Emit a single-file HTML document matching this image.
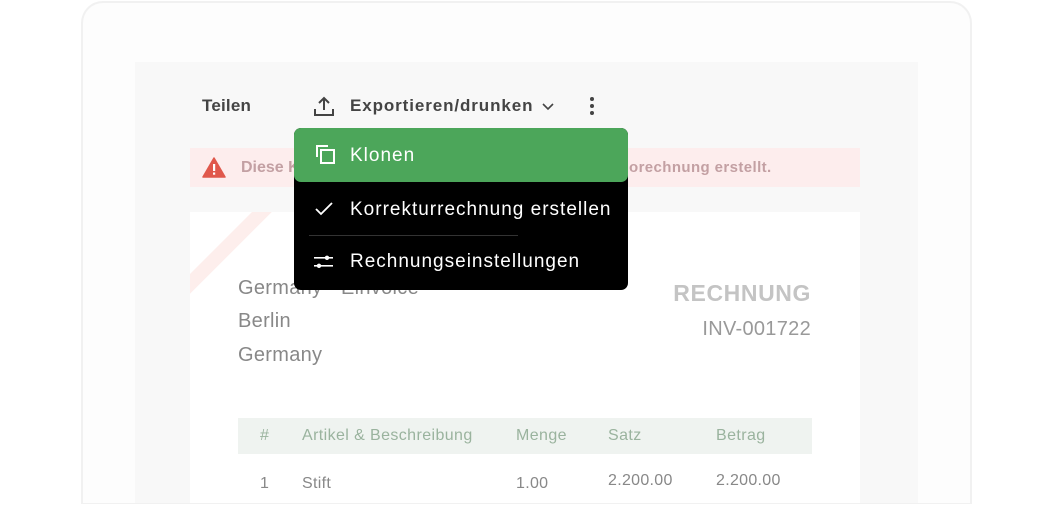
<!DOCTYPE html>
<html><head><meta charset="utf-8"><style>
*{margin:0;padding:0;box-sizing:border-box}
html,body{width:1052px;height:505px;overflow:hidden}
body{background:#fff;position:relative;font-family:"Liberation Sans",sans-serif}
.frame{position:absolute;left:81px;top:1px;width:891px;height:503px;border:2px solid #f1f1f1;border-bottom-width:1px;border-radius:22px 22px 0 0;background:#fdfdfd}
.panel{position:absolute;left:135px;top:62px;width:783px;height:441px;background:#f8f8f8}
.t{position:absolute;white-space:nowrap}
.alert{position:absolute;left:190px;top:148px;width:670px;height:39px;background:#fdeded}
.card{position:absolute;left:190px;top:212px;width:670px;height:291px;background:#fff;overflow:hidden}
.menu{position:absolute;left:294px;top:128px;width:334px;height:162px;background:#000;border-radius:7px}
.green{position:absolute;left:0;top:0;width:334px;height:54px;background:#4ca65a;border-radius:7px}
.mi{position:absolute;color:#fff;font-size:19px;left:56px;letter-spacing:1px}
.th{font-size:16px;color:#9ab39e;letter-spacing:0.4px}
.td{font-size:16px;color:#888;letter-spacing:0.3px}
</style></head><body>
<div class="frame"></div>
<div class="panel"></div>
<div class="t" style="left:202px;top:96px;font-size:17px;color:#444;font-weight:bold;letter-spacing:0.2px">Teilen</div>
<svg style="position:absolute;left:313px;top:95px" width="22" height="22" viewBox="0 0 22 22" fill="none" stroke="#444" stroke-width="2"><path d="M2 14v6h18v-6"/><path d="M11 15V3M6 8l5-5 5 5"/></svg>
<div class="t" style="left:350px;top:96px;font-size:17px;color:#444;font-weight:bold;letter-spacing:0.9px">Exportieren/drunken</div>
<svg style="position:absolute;left:541px;top:101px" width="14" height="10" viewBox="0 0 14 10" fill="none" stroke="#444" stroke-width="1.6"><path d="M2 3l5 5 5-5"/></svg>
<svg style="position:absolute;left:588px;top:96px" width="8" height="20"><circle cx="4" cy="3" r="2" fill="#444"/><circle cx="4" cy="10" r="2" fill="#444"/><circle cx="4" cy="17" r="2" fill="#444"/></svg>
<div class="alert">
<svg style="position:absolute;left:12px;top:9px" width="24" height="21" viewBox="0 0 24 21"><path d="M12 1L23 20H1z" fill="#e0584c" stroke="#e0584c" stroke-linejoin="round" stroke-width="1.5"/><rect x="11" y="7" width="2.2" height="7" fill="#fff"/><rect x="11" y="15.5" width="2.2" height="2.2" fill="#fff"/></svg>
<div class="t" style="left:51px;top:11px;font-size:16px;color:#c3a0a3;font-weight:bold">Diese K</div>
<div class="t" style="left:439px;top:11px;font-size:15px;color:#c3a0a3;font-weight:bold;letter-spacing:0.4px">orechnung erstellt.</div>
</div>
<div class="card">
<div style="position:absolute;width:14px;height:120px;background:#fdeeec;transform:rotate(45deg);transform-origin:top left;left:72px;top:-10px"></div>
<div class="t" style="left:48px;top:65px;font-size:20px;color:#888;letter-spacing:0.3px">Germany - Einvoice</div>
<div class="t" style="left:48px;top:98px;font-size:20px;color:#888;letter-spacing:0.3px">Berlin</div>
<div class="t" style="left:48px;top:132px;font-size:20px;color:#888;letter-spacing:0.3px">Germany</div>
<div class="t" style="right:49px;top:68px;font-size:23px;color:#c4c4c4;font-weight:bold;letter-spacing:0.6px">RECHNUNG</div>
<div class="t" style="right:49px;top:106px;font-size:20px;color:#999;letter-spacing:0.3px">INV-001722</div>
<div style="position:absolute;left:48px;top:206px;width:574px;height:36px;background:#eff3f0"></div>
<div class="t th" style="left:70px;top:215px">#</div>
<div class="t th" style="left:112px;top:215px">Artikel &amp; Beschreibung</div>
<div class="t th" style="left:326px;top:215px">Menge</div>
<div class="t th" style="left:418px;top:215px">Satz</div>
<div class="t th" style="left:526px;top:215px">Betrag</div>
<div class="t td" style="left:70px;top:263px">1</div>
<div class="t td" style="left:112px;top:263px">Stift</div>
<div class="t td" style="left:326px;top:263px">1.00</div>
<div class="t td" style="left:418px;top:260px">2.200.00</div>
<div class="t td" style="left:526px;top:260px">2.200.00</div>
</div>
<div class="menu">
<div class="green"></div>
<svg style="position:absolute;left:21px;top:16px" width="22" height="22" viewBox="0 0 22 22" fill="none" stroke="#fff" stroke-width="2"><path d="M2 13V2h11"/><rect x="6" y="6" width="13" height="13"/></svg>
<div class="mi" style="top:17px">Klonen</div>
<svg style="position:absolute;left:20px;top:73px" width="20" height="16" viewBox="0 0 20 16" fill="none" stroke="#fff" stroke-width="1.8"><path d="M2 8l5 5L18 2"/></svg>
<div class="mi" style="top:71px">Korrekturrechnung erstellen</div>
<div style="position:absolute;left:15px;top:107px;width:209px;height:1px;background:#333"></div>
<svg style="position:absolute;left:20px;top:126px" width="20" height="16" viewBox="0 0 20 16" fill="#fff"><rect x="0" y="3" width="19" height="1.6"/><rect x="0" y="11" width="19" height="1.6"/><circle cx="13" cy="3.8" r="2.2"/><circle cx="5" cy="11.8" r="2.2"/></svg>
<div class="mi" style="top:123px">Rechnungseinstellungen</div>
</div>
</body></html>
